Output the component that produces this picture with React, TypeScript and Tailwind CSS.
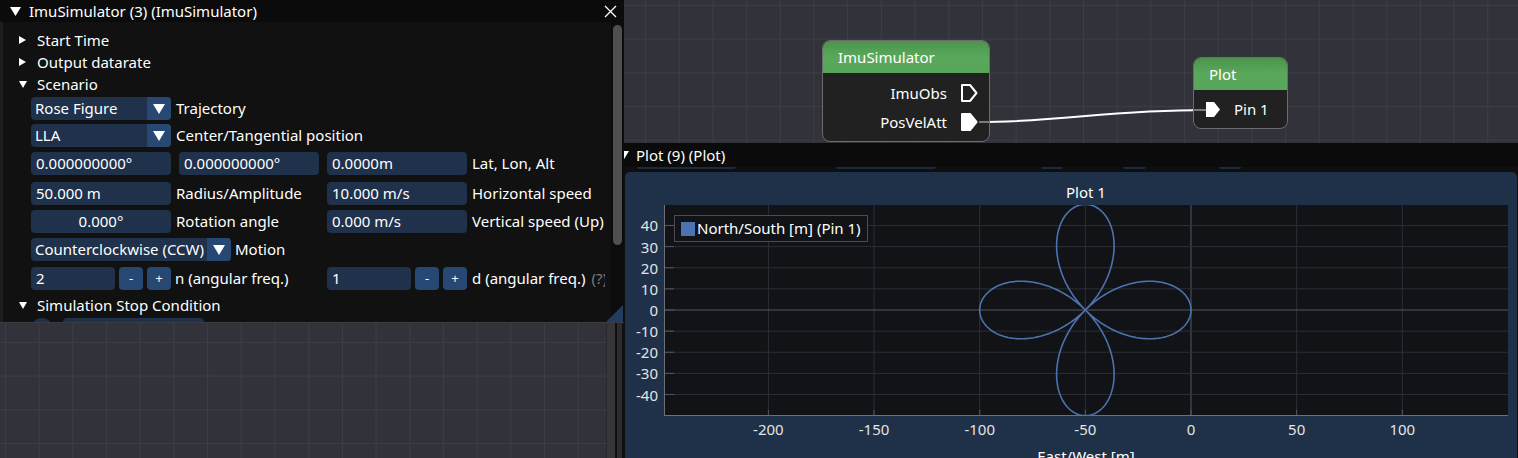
import React from 'react'

// plot scale (px per metre) and origin inside the plot area
const S = 2.113
const OX = 527
const OY = 105

const rose: string[] = []
for (let i = 0; i <= 720; i++) {
  const t = (i / 720) * 2 * Math.PI
  const r = 50 * Math.cos(2 * t)
  const x = -50 + r * Math.cos(t)
  const y = r * Math.sin(t)
  rose.push(`${(OX + x * S).toFixed(2)},${(OY - y * S).toFixed(2)}`)
}

const xTicks = [-200, -150, -100, -50, 0, 50, 100]
const yTicks = [40, 30, 20, 10, 0, -10, -20, -30, -40]

function TriDown({ w, h }: { w: number; h: number }) {
  return (
    <svg width={w} height={h} className="shrink-0">
      <polygon points={`0,0 ${w},0 ${w / 2},${h}`} fill="white" />
    </svg>
  )
}

function TriRight({ w, h }: { w: number; h: number }) {
  return (
    <svg width={w} height={h} className="shrink-0">
      <polygon points={`0,0 ${w},${h / 2} 0,${h}`} fill="white" />
    </svg>
  )
}

function Tree({ open, label, className = '' }: { open?: boolean; label: string; className?: string }) {
  return (
    <div className={`h-[20px] shrink-0 flex items-center pl-[16px] ${className}`}>
      <div className="w-[18px] shrink-0 flex items-center">
        {open ? <TriDown w={8} h={7} /> : <TriRight w={7} h={8} />}
      </div>
      <span className="whitespace-nowrap">{label}</span>
    </div>
  )
}

function Field({ w, text, center }: { w: string; text: string; center?: boolean }) {
  return (
    <div className={`h-[23px] ${w} shrink-0 rounded-[4px] bg-[#1f314b] flex items-center px-[5px] whitespace-nowrap ${center ? 'justify-center' : ''}`}>
      {text}
    </div>
  )
}

function Combo({ w, text }: { w: string; text: string }) {
  return (
    <div className={`h-[23px] ${w} shrink-0 rounded-[4px] bg-[#1f314b] flex overflow-hidden`}>
      <div className="flex-1 min-w-0 flex items-center pl-[4px] whitespace-nowrap overflow-hidden">{text}</div>
      <div className="w-[24px] shrink-0 bg-[#264873] flex items-center justify-center">
        <TriDown w={12} h={10} />
      </div>
    </div>
  )
}

function Btn({ label }: { label: string }) {
  return (
    <div className="h-[23px] w-[24px] shrink-0 rounded-[4px] bg-[#264873] flex items-center justify-center text-[13px]">
      {label}
    </div>
  )
}

function Pin({ filled }: { filled?: boolean }) {
  return (
    <svg width={17} height={18} className="shrink-0">
      <polygon
        points="1,1 9,1 15.5,9 9,17 1,17"
        fill={filled ? 'white' : 'none'}
        stroke="white"
        strokeWidth={2}
        strokeLinejoin="round"
      />
    </svg>
  )
}

function Label({ children, className = '' }: { children: React.ReactNode; className?: string }) {
  return <span className={`shrink-0 whitespace-nowrap ${className}`}>{children}</span>
}

function ImuWindow() {
  return (
    <div className="absolute left-0 top-0 z-20 w-[624px] h-[323px] bg-[#111111] border-b border-[#3a3a40] flex flex-col">
      <div className="h-[22px] shrink-0 bg-[#0b0b0b] flex items-center pl-[10px] pr-[7px]">
        <TriDown w={11} h={9} />
        <span className="ml-[8px] flex-1">ImuSimulator (3) (ImuSimulator)</span>
        <svg width={13} height={13}>
          <path d="M1 1 L12 12 M12 1 L1 12" stroke="white" strokeWidth={1.3} />
        </svg>
      </div>
      <div className="flex flex-1 min-h-0">
        <div className="w-[3px] shrink-0 bg-[#1d1d22]" />
        <div className="w-[602px] shrink-0 overflow-hidden pt-[8px] flex flex-col">
          <Tree label="Start Time" />
          <Tree label="Output datarate" className="mt-[2px]" />
          <Tree open label="Scenario" className="mt-[2px]" />
          <div className="mt-[3px] shrink-0 pl-[28px] flex items-center gap-[5px]">
            <Combo w="w-[140px]" text="Rose Figure" />
            <Label>Trajectory</Label>
          </div>
          <div className="mt-[4px] shrink-0 pl-[28px] flex items-center gap-[5px]">
            <Combo w="w-[140px]" text="LLA" />
            <Label>Center/Tangential position</Label>
          </div>
          <div className="mt-[5px] shrink-0 pl-[28px] flex items-center">
            <Field w="w-[140px]" text="0.000000000°" />
            <div className="ml-[8px] shrink-0">
              <Field w="w-[140px]" text="0.000000000°" />
            </div>
            <div className="ml-[8px] shrink-0">
              <Field w="w-[140px]" text="0.0000m" />
            </div>
            <Label className="ml-[5px]">Lat, Lon, Alt</Label>
          </div>
          <div className="mt-[7px] shrink-0 pl-[28px] flex items-center">
            <Field w="w-[140px]" text="50.000 m" />
            <Label className="ml-[5px] w-[151px]">Radius/Amplitude</Label>
            <Field w="w-[140px]" text="10.000 m/s" />
            <Label className="ml-[5px]">Horizontal speed</Label>
          </div>
          <div className="mt-[5px] shrink-0 pl-[28px] flex items-center">
            <Field w="w-[140px]" text="0.000°" center />
            <Label className="ml-[5px] w-[151px]">Rotation angle</Label>
            <Field w="w-[140px]" text="0.000 m/s" />
            <Label className="ml-[5px]">Vertical speed (Up)</Label>
          </div>
          <div className="mt-[5px] shrink-0 pl-[28px] flex items-center gap-[4px]">
            <Combo w="w-[200px]" text="Counterclockwise (CCW)" />
            <Label>Motion</Label>
          </div>
          <div className="mt-[6px] shrink-0 pl-[28px] flex items-center">
            <Field w="w-[84px]" text="2" />
            <div className="ml-[4px] shrink-0 flex gap-[4px]">
              <Btn label="-" />
              <Btn label="+" />
            </div>
            <Label className="ml-[4px] w-[152px]">n (angular freq.)</Label>
            <Field w="w-[84px]" text="1" />
            <div className="ml-[4px] shrink-0 flex gap-[4px]">
              <Btn label="-" />
              <Btn label="+" />
            </div>
            <Label className="ml-[5px]">d (angular freq.)</Label>
            <Label className="ml-[6px] text-[#7c7c7c]">(?)</Label>
          </div>
          <Tree open label="Simulation Stop Condition" className="mt-[5px]" />
          <div className="mt-[3px] shrink-0 pl-[28px] flex items-start gap-[10px]">
            <div className="w-[22px] h-[22px] shrink-0 rounded-full bg-[#1f314b]" />
            <div className="w-[141px] h-[23px] shrink-0 rounded-[4px] bg-[#1f314b]" />
          </div>
        </div>
        <div className="flex-1" />
        <div className="w-[13px] shrink-0 bg-[#0c0c0c] pt-[3px] px-[2px]">
          <div className="h-[220px] w-[9px] rounded-full bg-[#4f4f4f]" />
        </div>
      </div>
      <svg width={17} height={17} className="absolute right-[1px] bottom-0">
        <polygon points="17,0 17,17 0,17" fill="#213c60" />
      </svg>
    </div>
  )
}

function PlotWindow() {
  return (
    <div className="absolute left-[606px] top-[143px] z-10 w-[912px] h-[315px] bg-[#0f0f0f] border-l border-[#2a2a2e] flex flex-col">
      <div className="h-[24px] shrink-0 bg-[#0b0b0b] flex items-center pl-[11px]">
        <TriDown w={11} h={9} />
        <span className="ml-[7px]">Plot (9) (Plot)</span>
      </div>
      <div className="relative h-[5px] shrink-0">
        <div className="absolute left-[30px] top-0 w-[99px] h-[2px] rounded-b-[3px] bg-[#1a2a40]" />
        <div className="absolute left-[229px] top-0 w-[100px] h-[2px] rounded-b-[3px] bg-[#1a2a40]" />
        <div className="absolute left-[434px] top-0 w-[22px] h-[2px] rounded-b-[3px] bg-[#1a2a40]" />
        <div className="absolute left-[516px] top-0 w-[23px] h-[2px] rounded-b-[3px] bg-[#1a2a40]" />
        <div className="absolute left-[612px] top-0 w-[22px] h-[2px] rounded-b-[3px] bg-[#1a2a40]" />
      </div>
      <div className="flex flex-1 min-h-0">
        <div className="w-[18px] shrink-0 flex">
          <div className="w-[8px] bg-[#35353a]" />
          <div className="w-[2px]" />
          <div className="w-[5px] bg-[#2c2c30]" />
        </div>
        <div className="w-[892px] shrink-0 rounded-t-[5px] bg-[#1f3049] flex flex-col">
          <div className="h-[20px] shrink-0 mt-[10px] mb-[3px] flex items-center justify-center pl-[30px]">Plot 1</div>
          <div className="relative shrink-0 ml-[39px] w-[844px] h-[211px] bg-[#111317]">
            <svg width={844} height={211} className="absolute left-0 top-0">
              {xTicks.map((v) => (
                <line key={'gx' + v} x1={OX + v * S} x2={OX + v * S} y1={0} y2={211} stroke={v === 0 ? '#57595e' : '#2c2f34'} strokeWidth={1} />
              ))}
              {yTicks.map((v) => (
                <line key={'gy' + v} x1={0} x2={844} y1={OY - v * S} y2={OY - v * S} stroke={v === 0 ? '#57595e' : '#2c2f34'} strokeWidth={1} />
              ))}
              {yTicks.map((v) => (
                <line key={'ty' + v} x1={0} x2={10} y1={OY - v * S} y2={OY - v * S} stroke="#55585e" strokeWidth={1} />
              ))}
              {xTicks.map((v) => (
                <line key={'tx' + v} x1={OX + v * S} x2={OX + v * S} y1={205} y2={211} stroke="#55585e" strokeWidth={1} />
              ))}
              <polyline points={rose.join(' ')} fill="none" stroke="#4c72b0" strokeWidth={1.6} />
              <line x1={0.5} x2={0.5} y1={0} y2={211} stroke="#6c7078" />
              <line x1={0} x2={844} y1={210.5} y2={210.5} stroke="#6c7078" />
            </svg>
            {yTicks.map((v) => (
              <span
                key={'ly' + v}
                className="absolute right-[850px] -translate-y-1/2 leading-none text-[#e4e4e4]"
                style={{ top: OY - v * S }}
              >
                {v}
              </span>
            ))}
            {xTicks.map((v) => (
              <span
                key={'lx' + v}
                className="absolute top-[217px] -translate-x-1/2 leading-none text-[#e4e4e4]"
                style={{ left: OX + v * S }}
              >
                {v}
              </span>
            ))}
            <div className="absolute left-[10px] top-[10px] h-[27px] px-[6px] border border-[#4a4c52] bg-[#111317] flex items-center gap-[2px]">
              <div className="w-[14px] h-[14px] shrink-0 bg-[#4c72b0]" />
              <span className="whitespace-nowrap">North/South [m] (Pin 1)</span>
            </div>
          </div>
          <div className="mt-[33px] shrink-0 ml-[39px] w-[844px] flex justify-center">East/West [m]</div>
        </div>
      </div>
    </div>
  )
}

function NodeEditor() {
  return (
    <>
      <svg width={1518} height={458} className="absolute left-0 top-0">
        <path d="M 978 122 C 1065 122, 1105 110, 1207 110" fill="none" stroke="white" strokeWidth={2} />
      </svg>
      <div className="absolute left-[822px] top-[40px] w-[168px] h-[102px] rounded-[8px] border-[1.5px] border-[#6c6c6c] bg-[#212121] overflow-hidden flex flex-col">
        <div className="h-[32px] shrink-0 bg-gradient-to-b from-[#4b944d] via-[#5aa85c] to-[#58a55a] flex items-center pl-[15px]">
          ImuSimulator
        </div>
        <div className="flex flex-col items-end pr-[11px] pt-[10px] gap-[9px]">
          <div className="h-[20px] flex items-center gap-[14px]">
            <span>ImuObs</span>
            <Pin />
          </div>
          <div className="h-[20px] flex items-center gap-[14px]">
            <span>PosVelAtt</span>
            <Pin filled />
          </div>
        </div>
      </div>
      <div className="absolute left-[1193px] top-[57px] w-[95px] h-[72px] rounded-[8px] border-[1.5px] border-[#6c6c6c] bg-[#212121] overflow-hidden flex flex-col">
        <div className="h-[32px] shrink-0 bg-gradient-to-b from-[#4b944d] via-[#5aa85c] to-[#58a55a] flex items-center pl-[15px]">
          Plot
        </div>
        <div className="flex items-center pl-[12px] pt-[12px] gap-[13px]">
          <svg width={15} height={15} className="shrink-0">
            <polygon points="0,0 8,0 14,7.5 8,15 0,15" fill="white" />
          </svg>
          <span>Pin 1</span>
        </div>
      </div>
      <svg width={1518} height={458} className="absolute left-0 top-0">
        <line x1={979} x2={989} y1={122} y2={122} stroke="#9a9a9a" strokeWidth={1.5} />
        <line x1={1194} x2={1206} y1={110} y2={110} stroke="#9a9a9a" strokeWidth={1.5} />
      </svg>
    </>
  )
}

export default function App() {
  return (
    <div className="relative w-[1518px] h-[458px] overflow-hidden font-['Noto_Sans',sans-serif] text-[15px] leading-none text-white bg-[#32333a] bg-[linear-gradient(to_right,#3d3e45_1px,transparent_1px),linear-gradient(to_bottom,#3d3e45_1px,transparent_1px)] bg-size-[33.7px_33.7px] bg-position-[5px_5px]">
      <NodeEditor />
      <PlotWindow />
      <ImuWindow />
    </div>
  )
}
